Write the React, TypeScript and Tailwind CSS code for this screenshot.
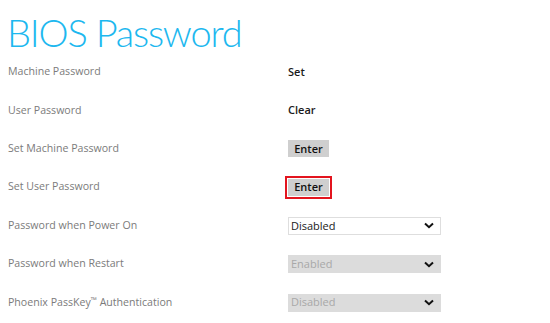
import React from "react";

type Row = {
  label: React.ReactNode;
  kind: "text" | "button" | "select";
  value: string;
  highlight?: boolean;
  disabled?: boolean;
};

const ROWS: Row[] = [
  { label: "Machine Password", kind: "text", value: "Set" },
  { label: "User Password", kind: "text", value: "Clear" },
  { label: "Set Machine Password", kind: "button", value: "Enter" },
  { label: "Set User Password", kind: "button", value: "Enter", highlight: true },
  { label: "Password when Power On", kind: "select", value: "Disabled" },
  { label: "Password when Restart", kind: "select", value: "Enabled", disabled: true },
  {
    label: (
      <>
        Phoenix PassKey<span className="text-[8px] align-[3px]">™</span> Authentication
      </>
    ),
    kind: "select",
    value: "Disabled",
    disabled: true,
  },
];

function Chevron({ className }: { className?: string }) {
  return (
    <svg width="10" height="7" viewBox="0 0 10 7" className={className}>
      <path d="M1 1.5 L5 5.2 L9 1.5" fill="none" stroke="currentColor" strokeWidth="2" />
    </svg>
  );
}

function Value({ row }: { row: Row }) {
  if (row.kind === "text") {
    return <span className="text-[11px] font-semibold text-[#1a1a1a]">{row.value}</span>;
  }
  if (row.kind === "button") {
    const btn = (
      <span className="flex h-[17px] w-[41px] items-center justify-center bg-[#cfcfcf] text-[11px] font-semibold text-[#111]">
        {row.value}
      </span>
    );
    return row.highlight ? (
      <span className="-ml-[3px] inline-flex border-2 border-[#e3141e] p-px">{btn}</span>
    ) : (
      btn
    );
  }
  return (
    <div
      className={
        row.disabled
          ? "flex h-[18px] w-[153px] items-center justify-between bg-[#dcdcdc] pl-[3px] pr-[7px] text-[11px] text-[#a8a8a8]"
          : "flex h-[18px] w-[153px] items-center justify-between border border-[#dedede] bg-white pl-[2px] pr-[6px] text-[11px] text-[#1a1a1a]"
      }
    >
      <span>{row.value}</span>
      <Chevron className="text-[#111]" />
    </div>
  );
}

export default function App() {
  return (
    <div className="h-[323px] w-[550px] overflow-hidden bg-white font-['Open_Sans',sans-serif]">
      <h1 className="ml-[7px] pt-[12px] font-['Lato',sans-serif] text-[38px] font-light leading-[40px] tracking-[-1.2px] text-[#1db8ef]">
        BIOS Password
      </h1>
      <div className="mt-[1px] flex flex-col">
        {ROWS.map((row, i) => (
          <div key={i} className="grid h-[38.4px] grid-cols-[280px_1fr] items-center px-2">
            <span className="text-[10.6px] text-[#7b7b7b]">{row.label}</span>
            <div className="flex items-center">
              <Value row={row} />
            </div>
          </div>
        ))}
      </div>
    </div>
  );
}
